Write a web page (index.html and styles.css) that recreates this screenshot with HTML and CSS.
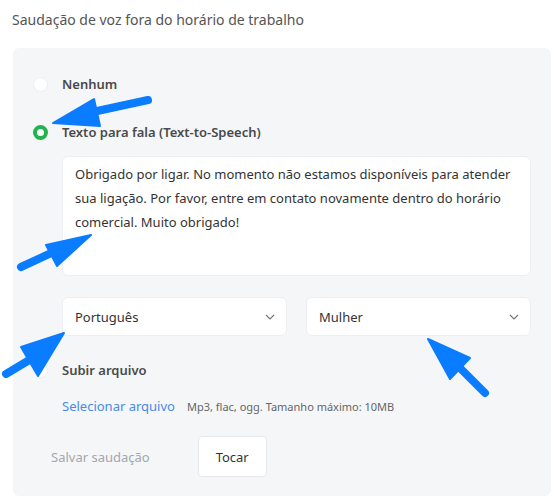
FILE: index.html
```html
<!DOCTYPE html>
<html lang="pt">
<head>
    <meta charset="UTF-8">
    <meta name="viewport" content="width=device-width, initial-scale=1.0">
    <title>Saudação fora do horário</title>
    <link rel="stylesheet" href="styles.css">
</head>
<body>

    <h3 class="title">Saudação de voz fora do horário de trabalho</h3>

    <div class="panel">
        <label class="option">
            <span class="radio"></span>
            <span class="option-label">Nenhum</span>
        </label>

        <label class="option">
            <span class="radio checked"></span>
            <span class="option-label">Texto para fala (Text-to-Speech)</span>
        </label>

        <div class="option-body">
            <div class="textbox">Obrigado por ligar. No momento não estamos disponíveis para atender sua ligação. Por favor, entre em contato novamente dentro do horário comercial. Muito obrigado!</div>

            <div class="selects">
                <div class="select">
                    <span>Português</span>
                    <svg class="chevron" width="10" height="6" viewBox="0 0 10 6"><path d="M1 1l4 4 4-4" fill="none" stroke="#777" stroke-width="1.2"/></svg>
                </div>
                <div class="select">
                    <span>Mulher</span>
                    <svg class="chevron" width="10" height="6" viewBox="0 0 10 6"><path d="M1 1l4 4 4-4" fill="none" stroke="#777" stroke-width="1.2"/></svg>
                </div>
            </div>
        </div>

        <label class="option">
            <span class="radio"></span>
            <span class="option-label">Subir arquivo</span>
        </label>

        <div class="upload">
            <a href="#" class="link">Selecionar arquivo</a>
            <span class="hint">Mp3, flac, ogg. Tamanho máximo: 10MB</span>
        </div>

        <div class="actions">
            <span class="save">Salvar saudação</span>
            <button class="play">Tocar</button>
        </div>
    </div>

    <!-- annotation arrows -->
    <svg class="arrows" width="556" height="503" viewBox="0 0 556 503">
        <g fill="#0a7cff" stroke="#0a7cff" stroke-linecap="round" stroke-linejoin="round">
            <line x1="148" y1="100" x2="88" y2="113" stroke-width="8"/>
            <polygon points="53,123 94,99 100,126" stroke-width="2"/>

            <line x1="21" y1="267" x2="62" y2="248" stroke-width="8"/>
            <polygon points="91,235 46,245 57,266" stroke-width="2"/>

            <line x1="6" y1="374" x2="36" y2="356" stroke-width="8"/>
            <polygon points="64,333 21,347 38,376" stroke-width="2"/>

            <line x1="485" y1="393" x2="452" y2="360" stroke-width="8"/>
            <polygon points="428,339 450,379 470,358" stroke-width="2"/>
        </g>
    </svg>

</body>
</html>
```

FILE: styles.css
```css
body {
    font-family: "Noto Sans", "Open Sans", sans-serif;
    margin: 0;
    padding: 8px 5px 0 13px;
    color: #333;
    position: relative;
}

.title {
    font-size: 14px;
    font-weight: normal;
    color: #555;
    margin: 0 0 16px -1px;
    line-height: 24px;
}

.panel {
    background-color: #f5f6f8;
    border-radius: 6px;
    padding: 24px 20px 20px 20px;
    height: 448px;
    box-sizing: border-box;
}

.option {
    display: flex;
    align-items: center;
    gap: 14px;
    height: 24px;
    margin: 0 0 24px 0;
}

.radio {
    width: 15px;
    height: 15px;
    border-radius: 50%;
    background-color: #fff;
    border: 1px solid #eceef1;
    box-sizing: border-box;
}

.radio.checked {
    border: 4px solid #1fb450;
    background-color: #fff;
}

.option-label {
    font-size: 13px;
    font-weight: 600;
    color: #4a4a4a;
}

.option-body {
    margin: -12px 0 0 29px;
}

.textbox {
    background-color: #fff;
    border: 1px solid #eceef1;
    border-radius: 6px;
    height: 120px;
    box-sizing: border-box;
    padding: 5px 12px;
    font-size: 13px;
    line-height: 24px;
    color: #333;
}

.selects {
    display: flex;
    gap: 19px;
    margin: 21px 0 22px 0;
}

.select {
    flex: 1;
    height: 39px;
    background-color: #fff;
    border: 1px solid #eceef1;
    border-radius: 6px;
    box-sizing: border-box;
    display: flex;
    align-items: center;
    justify-content: space-between;
    padding: 0 11px 0 12px;
    font-size: 13px;
    color: #333;
}

.upload {
    display: flex;
    align-items: center;
    gap: 12px;
    margin: -12px 0 0 29px;
    height: 24px;
}

.link {
    color: #4a8ae8;
    text-decoration: none;
    font-size: 13px;
}

.hint {
    font-size: 11px;
    color: #666;
}

.actions {
    display: flex;
    align-items: center;
    gap: 48px;
    margin: 18px 0 0 18px;
}

.save {
    font-size: 13px;
    color: #a3a7ad;
}

.play {
    font-family: inherit;
    background-color: #fff;
    border: 1px solid #e6e8eb;
    border-radius: 4px;
    width: 69px;
    height: 41px;
    font-size: 13px;
    color: #333;
}

.arrows {
    position: absolute;
    top: 0;
    left: 0;
    pointer-events: none;
}
```
